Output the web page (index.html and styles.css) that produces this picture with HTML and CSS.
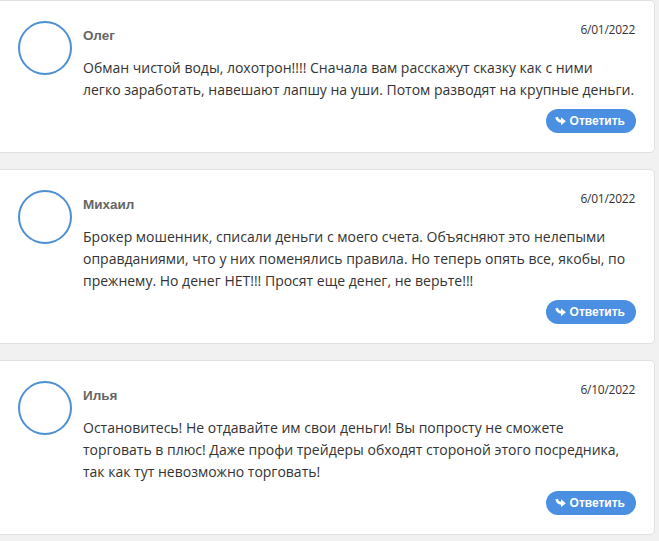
FILE: index.html
```html
<!DOCTYPE html>
<html lang="ru">
<head>
<meta charset="utf-8">
<link rel="stylesheet" href="styles.css">
</head>
<body>
<div class="list">
  <div class="card">
    <div class="avatar"></div>
    <div class="content">
      <div class="head">
        <span class="name">Олег</span>
        <span class="date">6/01/2022</span>
      </div>
      <p class="text">Обман чистой воды, лохотрон!!!! Сначала вам расскажут сказку как с ними<br>легко заработать, навешают лапшу на уши. Потом разводят на крупные деньги.</p>
      <div class="actions">
        <button class="reply"><svg class="ico" viewBox="0 0 12 10" width="11" height="10"><path d="M0.3 1.2 L3.2 0.4 C3.6 2.4 4.6 3.6 6.6 3.6 L6.6 0.8 L11.8 5.2 L6.6 9.6 L6.6 6.8 C3.4 6.8 1.2 4.8 0.3 1.2 Z" fill="#fff"/></svg>Ответить</button>
      </div>
    </div>
  </div>
  <div class="card">
    <div class="avatar"></div>
    <div class="content">
      <div class="head">
        <span class="name">Михаил</span>
        <span class="date">6/01/2022</span>
      </div>
      <p class="text">Брокер мошенник, списали деньги с моего счета. Объясняют это нелепыми<br>оправданиями, что у них поменялись правила. Но теперь опять все, якобы, по<br>прежнему. Но денег НЕТ!!! Просят еще денег, не верьте!!!</p>
      <div class="actions">
        <button class="reply"><svg class="ico" viewBox="0 0 12 10" width="11" height="10"><path d="M0.3 1.2 L3.2 0.4 C3.6 2.4 4.6 3.6 6.6 3.6 L6.6 0.8 L11.8 5.2 L6.6 9.6 L6.6 6.8 C3.4 6.8 1.2 4.8 0.3 1.2 Z" fill="#fff"/></svg>Ответить</button>
      </div>
    </div>
  </div>
  <div class="card">
    <div class="avatar"></div>
    <div class="content">
      <div class="head">
        <span class="name">Илья</span>
        <span class="date">6/10/2022</span>
      </div>
      <p class="text">Остановитесь! Не отдавайте им свои деньги! Вы попросту не сможете<br>торговать в плюс! Даже профи трейдеры обходят стороной этого посредника,<br>так как тут невозможно торговать!</p>
      <div class="actions">
        <button class="reply"><svg class="ico" viewBox="0 0 12 10" width="11" height="10"><path d="M0.3 1.2 L3.2 0.4 C3.6 2.4 4.6 3.6 6.6 3.6 L6.6 0.8 L11.8 5.2 L6.6 9.6 L6.6 6.8 C3.4 6.8 1.2 4.8 0.3 1.2 Z" fill="#fff"/></svg>Ответить</button>
      </div>
    </div>
  </div>
</div>
</body>
</html>
```

FILE: styles.css
```css
html, body {
  margin: 0;
  padding: 0;
  background: #f1f1f1;
}
body {
  font-family: "Open Sans", "Noto Sans", sans-serif;
  color: #333;
}
.list {
  display: flex;
  flex-direction: column;
  gap: 16px;
  margin-left: -6px;
  width: 661px;
}
.card {
  display: flex;
  align-items: flex-start;
  background: #fff;
  border: 1px solid #e0e0e0;
  border-radius: 5px;
  padding: 20px 17px 19px 23px;
}
.avatar {
  flex: none;
  width: 50px;
  height: 50px;
  border: 2px solid #4e8fd4;
  border-radius: 50%;
}
.content {
  flex: 1;
  margin-left: 11px;
  display: flex;
  flex-direction: column;
}
.head {
  display: flex;
  justify-content: space-between;
  align-items: flex-start;
  height: 36px;
}
.name {
  font-family: "Liberation Sans", Arial, sans-serif;
  font-weight: bold;
  font-size: 13.5px;
  color: #666;
  margin-top: 7px;
  line-height: 16px;
}
.date {
  font-size: 12px;
  letter-spacing: -0.25px;
  line-height: 18px;
  color: #333;
  margin-right: 2px;
}
.text {
  margin: 0;
  font-size: 14px;
  line-height: 22px;
  color: #333;
}
.actions {
  display: flex;
  justify-content: flex-end;
  margin-top: 8px;
}
.reply {
  display: flex;
  align-items: center;
  gap: 4px;
  height: 24px;
  margin-right: 1px;
  padding: 0 11px 0 9px;
  border: none;
  border-radius: 12px;
  background: #4a8fe2;
  color: #fff;
  font-family: "Liberation Sans", Arial, sans-serif;
  font-weight: bold;
  font-size: 12px;
}
.ico {
  display: block;
}
```
